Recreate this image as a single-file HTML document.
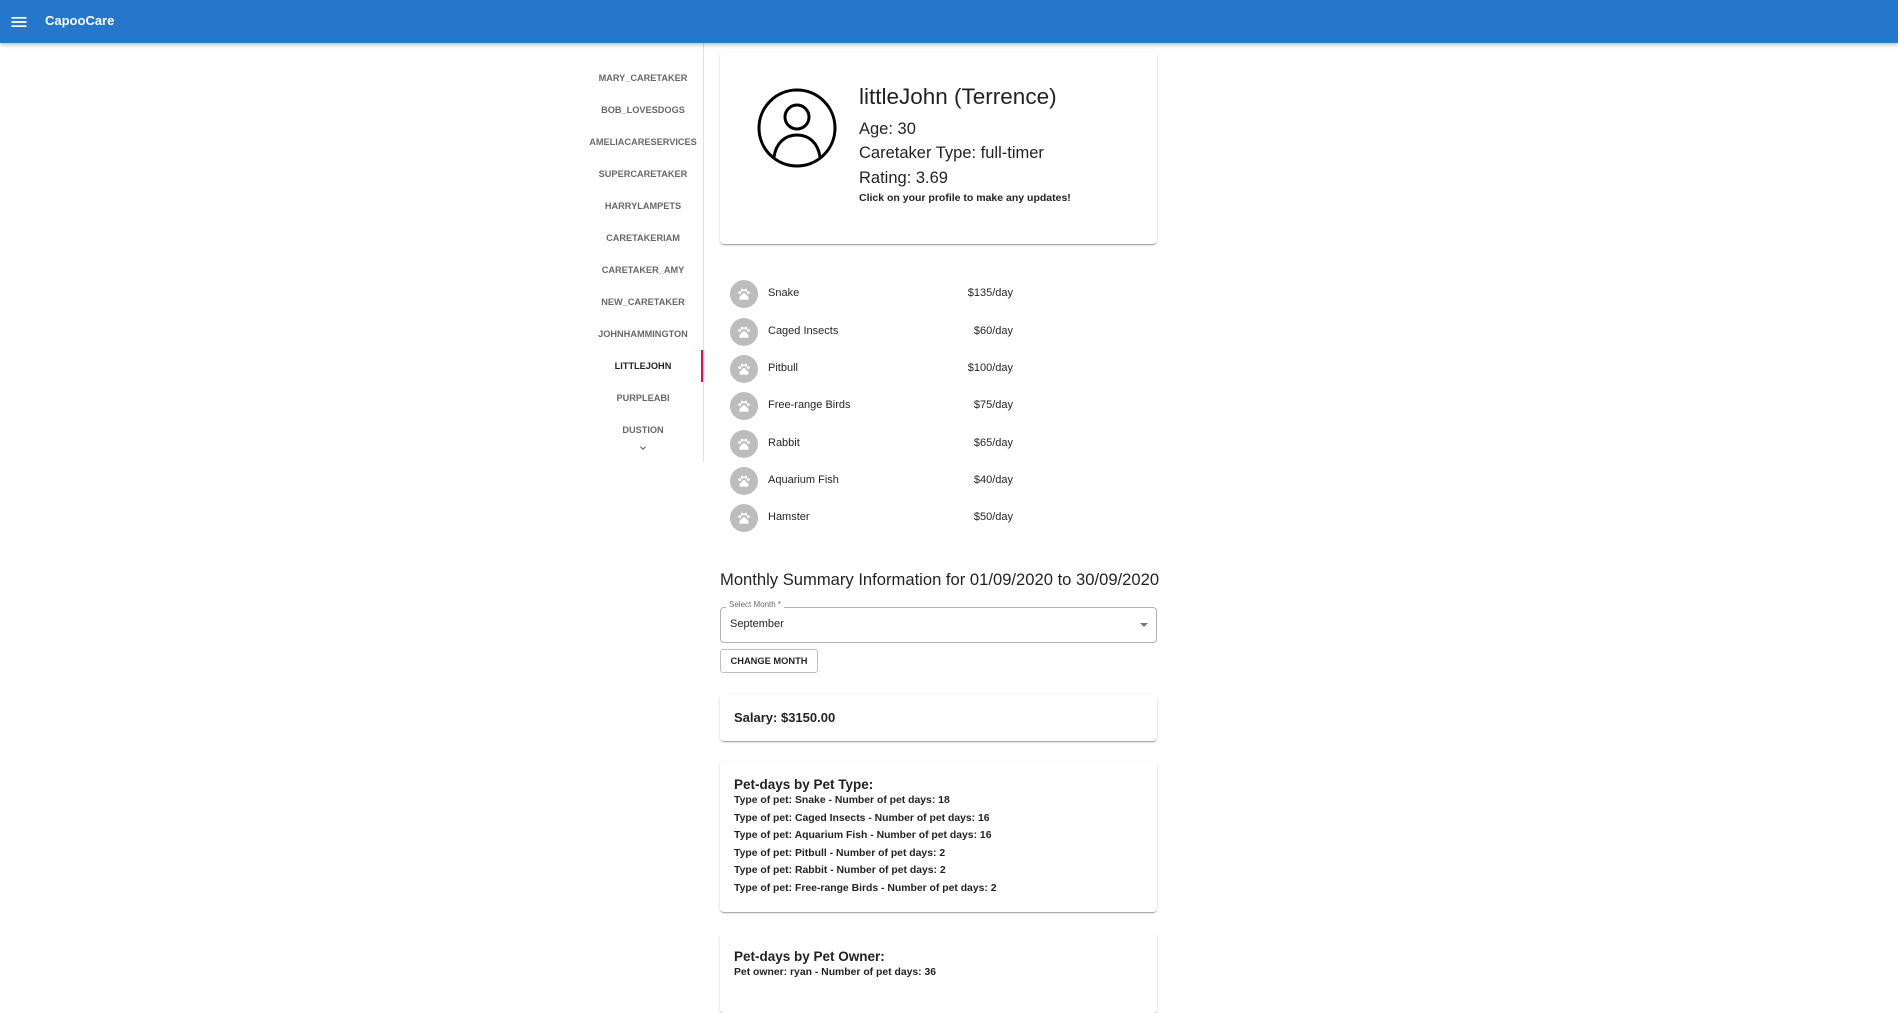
<!DOCTYPE html>
<html><head><meta charset="utf-8"><style>
*{margin:0;padding:0;box-sizing:border-box}
body{width:1898px;height:969px;overflow:hidden;background:#fff;font-family:"Liberation Sans",sans-serif;color:rgba(0,0,0,.87);position:relative}
.a{position:absolute}
.hdr{left:0;top:0;width:1898px;height:43px;background:#2577cc;box-shadow:0 2px 4px rgba(0,0,0,.25);z-index:2}
.tab{position:absolute;left:583px;width:120px;text-align:center;font-size:9.2px;font-weight:bold;color:rgba(0,0,0,.6);line-height:12px}
.card{position:absolute;background:#fff;border-radius:4px;box-shadow:0 2px 1px -1px rgba(0,0,0,.2),0 1px 1px rgba(0,0,0,.14),0 1px 3px rgba(0,0,0,.12)}
.row{position:absolute;left:730px;width:290px;height:28px}
.row .ic{position:absolute;left:0;top:0;width:28px;height:28px;border-radius:50%;background:#bdbdbd}
.row .n{position:absolute;left:38px;top:7px;font-size:11px}
.row .p{position:absolute;right:7px;top:7px;font-size:11px}
.pl{font-size:10.4px;font-weight:bold;line-height:17.5px;color:rgba(0,0,0,.87)}
</style></head><body>
<div class="a hdr">
<svg class="a" style="left:9px;top:12px" width="20" height="20" viewBox="0 0 24 24"><path d="M3 18h18v-2H3v2zm0-5h18v-2H3v2zm0-7v2h18V6H3z" fill="#fff"/></svg>
<div class="a" style="left:45px;top:13px;color:#fff;font-size:13px;font-weight:bold">CapooCare</div>
</div>
<div class="a" style="left:703px;top:43px;width:1px;height:419px;background:#e0e0e0"></div>
<div class="a" style="left:701px;top:350px;width:2px;height:32px;background:#f50057"></div>
<div class="tab" style="top:72px">MARY_CARETAKER</div>
<div class="tab" style="top:104px">BOB_LOVESDOGS</div>
<div class="tab" style="top:136px">AMELIACARESERVICES</div>
<div class="tab" style="top:168px">SUPERCARETAKER</div>
<div class="tab" style="top:200px">HARRYLAMPETS</div>
<div class="tab" style="top:232px">CARETAKERIAM</div>
<div class="tab" style="top:264px">CARETAKER_AMY</div>
<div class="tab" style="top:296px">NEW_CARETAKER</div>
<div class="tab" style="top:328px">JOHNHAMMINGTON</div>
<div class="tab" style="top:360px;color:rgba(0,0,0,.87)">LITTLEJOHN</div>
<div class="tab" style="top:392px">PURPLEABI</div>
<div class="tab" style="top:424px">DUSTION</div>
<svg class="a" style="left:637px;top:442px" width="12" height="12" viewBox="0 0 24 24"><path d="M7.41 8.59L12 13.17l4.59-4.58L18 10l-6 6-6-6z" fill="#555"/></svg>

<div class="card" style="left:720px;top:52px;width:437px;height:192px">
<svg class="a" style="left:37px;top:36px" width="80" height="80" viewBox="0 0 80 80" fill="none" stroke="#000" stroke-width="3"><circle cx="40" cy="40" r="38"/><circle cx="40" cy="29" r="12"/><path d="M17 69c2-14 11-22 23-22s21 8 23 22"/></svg>
<div class="a" style="left:139px;top:32px;font-size:22.5px">littleJohn (Terrence)</div>
<div class="a" style="left:139px;top:68px;font-size:16.5px">Age: 30</div>
<div class="a" style="left:139px;top:92px;font-size:16.5px">Caretaker Type: full-timer</div>
<div class="a" style="left:139px;top:117px;font-size:16.5px">Rating: 3.69</div>
<div class="a" style="left:139px;top:140px;font-size:10.5px;font-weight:bold">Click on your profile to make any updates!</div>
</div>

<div class="row" style="top:280px"><div class="ic"></div><div class="n">Snake</div><div class="p">$135/day</div></div>
<div class="row" style="top:318px"><div class="ic"></div><div class="n">Caged Insects</div><div class="p">$60/day</div></div>
<div class="row" style="top:355px"><div class="ic"></div><div class="n">Pitbull</div><div class="p">$100/day</div></div>
<div class="row" style="top:392px"><div class="ic"></div><div class="n">Free-range Birds</div><div class="p">$75/day</div></div>
<div class="row" style="top:430px"><div class="ic"></div><div class="n">Rabbit</div><div class="p">$65/day</div></div>
<div class="row" style="top:467px"><div class="ic"></div><div class="n">Aquarium Fish</div><div class="p">$40/day</div></div>
<div class="row" style="top:504px"><div class="ic"></div><div class="n">Hamster</div><div class="p">$50/day</div></div>

<svg width="0" height="0" style="position:absolute"><defs><symbol id="paw" viewBox="0 0 24 24"><g fill="#fff"><circle cx="4.5" cy="9.5" r="2.5"/><circle cx="9" cy="5.5" r="2.5"/><circle cx="15" cy="5.5" r="2.5"/><circle cx="19.5" cy="9.5" r="2.5"/><path d="M17.34 14.86c-.87-1.02-1.6-1.89-2.48-2.91-.46-.54-1.05-1.08-1.75-1.32-.11-.04-.22-.07-.33-.09-.25-.04-.52-.04-.78-.04s-.53 0-.79.05c-.11.02-.22.05-.33.09-.7.24-1.28.78-1.75 1.32-.87 1.020-1.6 1.89-2.48 2.91-1.31 1.31-2.92 2.76-2.62 4.79.29 1.02 1.02 2.03 2.330 2.32.73.15 3.06-.44 5.54-.44h.18c2.48 0 4.81.58 5.54.44 1.31-.29 2.04-1.31 2.33-2.32.31-2.04-1.3-3.49-2.61-4.8z"/></g></symbol></defs></svg>
<svg class="a" style="left:737px;top:287px" width="14" height="14"><use href="#paw"/></svg>
<svg class="a" style="left:737px;top:325px" width="14" height="14"><use href="#paw"/></svg>
<svg class="a" style="left:737px;top:362px" width="14" height="14"><use href="#paw"/></svg>
<svg class="a" style="left:737px;top:399px" width="14" height="14"><use href="#paw"/></svg>
<svg class="a" style="left:737px;top:437px" width="14" height="14"><use href="#paw"/></svg>
<svg class="a" style="left:737px;top:474px" width="14" height="14"><use href="#paw"/></svg>
<svg class="a" style="left:737px;top:511px" width="14" height="14"><use href="#paw"/></svg>

<div class="a" style="left:720px;top:570px;font-size:16.6px;width:460px;white-space:nowrap">Monthly Summary Information for 01/09/2020 to 30/09/2020</div>
<div class="a" style="left:720px;top:607px;width:437px;height:36px;border:1px solid rgba(0,0,0,.3);border-radius:4px"></div>
<div class="a" style="left:726px;top:600px;padding:0 3px;background:#fff;font-size:8px;color:rgba(0,0,0,.6)">Select Month *</div>
<div class="a" style="left:730px;top:618px;font-size:11px">September</div>
<div class="a" style="left:1140px;top:623px;width:0;height:0;border-left:4px solid transparent;border-right:4px solid transparent;border-top:4px solid rgba(0,0,0,.54)"></div>
<div class="a" style="left:720px;top:649px;width:98px;height:24px;border:1px solid rgba(0,0,0,.25);border-radius:3px;font-size:9.3px;font-weight:bold;text-align:center;line-height:22px">CHANGE MONTH</div>

<div class="card" style="left:720px;top:694px;width:437px;height:47px">
<div class="a" style="left:14px;top:16px;font-size:13px;font-weight:bold">Salary: $3150.00</div>
</div>
<div class="card" style="left:720px;top:761px;width:437px;height:151px">
<div class="a" style="left:14px;top:16px;font-size:13.5px;font-weight:bold">Pet-days by Pet Type:</div>
<div class="a pl" style="left:14px;top:31px">Type of pet: Snake - Number of pet days: 18<br>Type of pet: Caged Insects - Number of pet days: 16<br>Type of pet: Aquarium Fish - Number of pet days: 16<br>Type of pet: Pitbull - Number of pet days: 2<br>Type of pet: Rabbit - Number of pet days: 2<br>Type of pet: Free-range Birds - Number of pet days: 2</div>
</div>
<div class="card" style="left:720px;top:933px;width:437px;height:80px">
<div class="a" style="left:14px;top:16px;font-size:13.5px;font-weight:bold">Pet-days by Pet Owner:</div>
<div class="a pl" style="left:14px;top:31px">Pet owner: ryan - Number of pet days: 36</div>
</div>
</body></html>
